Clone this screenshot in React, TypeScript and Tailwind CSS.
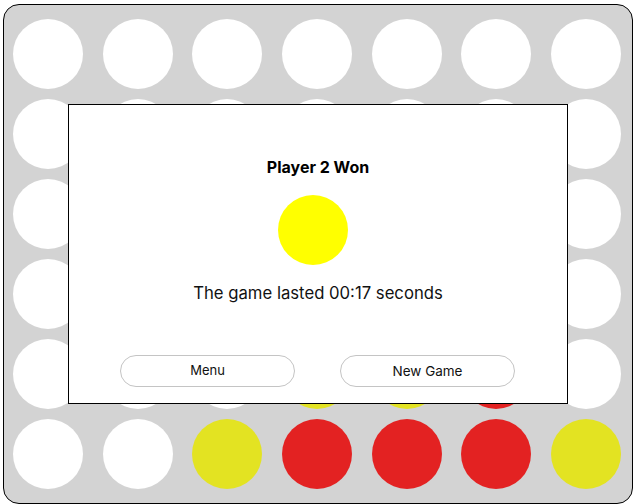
const EMPTY = "bg-white"
const RED = "bg-[#e32222]"
const YELLOW = "bg-[#e3e322]"

// 0 = empty, 1 = red, 2 = yellow
const board: number[][] = [
  [0, 0, 0, 0, 0, 0, 0],
  [0, 0, 0, 0, 0, 0, 0],
  [0, 0, 0, 0, 0, 0, 0],
  [0, 0, 0, 0, 0, 0, 0],
  [0, 0, 0, 2, 2, 1, 0],
  [0, 0, 2, 1, 1, 1, 2],
]

function Cell({ value }: { value: number }) {
  const color = value === 1 ? RED : value === 2 ? YELLOW : EMPTY
  return <div className={`h-[70px] w-[70px] rounded-full ${color}`} />
}

function ResultModal() {
  return (
    <div className="absolute left-[64px] top-[99px] flex h-[300px] w-[500px] flex-col items-center border border-black bg-white pt-[50px]">
      <h2 className="text-base leading-6 font-bold text-black">Player 2 Won</h2>
      <div className="mt-4 mr-[10px] h-[70px] w-[70px] rounded-full bg-[#ffff00]" />
      <p className="mt-4 text-[16.7px] leading-6 text-[#111]">The game lasted 00:17 seconds</p>

      <div className="mt-[50px] flex w-full gap-[45px] pl-[51px]">
        <button className="h-8 w-[175px] rounded-full border border-[#c4c4c4] bg-white text-[13px] text-[#111]">
          Menu
        </button>
        <button className="h-8 w-[175px] rounded-full border border-[#c4c4c4] bg-white text-[13.5px] text-[#111]">
          New Game
        </button>
      </div>
    </div>
  )
}

export default function App() {
  return (
    <div className="flex h-[504px] w-[636px] justify-center bg-white pt-1 font-['Inter',sans-serif]">
      <div className="relative h-[500px] w-[630px] rounded-[16px] border border-black bg-[#d3d3d3]">
        <div className="grid grid-cols-[repeat(7,70px)] gap-x-[19.67px] gap-y-[10px] pl-[9px] pt-[14px]">
          {board.map((row, r) =>
            row.map((v, c) => <Cell key={`${r}-${c}`} value={v} />)
          )}
        </div>
        <ResultModal />
      </div>
    </div>
  )
}
